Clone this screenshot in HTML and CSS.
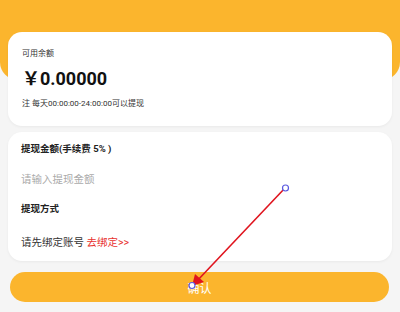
FILE: index.html
```html
<!DOCTYPE html>
<html lang="zh-CN">
<head>
    <meta charset="UTF-8">
    <meta name="viewport" content="width=device-width, initial-scale=1.0">
    <title>提现</title>
    <link rel="stylesheet" href="styles.css">
</head>
<body>
    <div class="page">
        <div class="header-bg"></div>

        <div class="content">
            <div class="card balance-card">
                <div class="label">可用余额</div>
                <div class="amount">￥0.00000</div>
                <div class="note">注 每天00:00:00-24:00:00可以提现</div>
            </div>

            <div class="card form-card">
                <div class="field-title">提现金额(手续费 5% )</div>
                <div class="field-input">请输入提现金额</div>
                <div class="field-title method">提现方式</div>
                <div class="bind-row">请先绑定账号 <span class="bind-link">去绑定&gt;&gt;</span></div>
            </div>

            <button class="btn-confirm">确认</button>
        </div>

        <!-- annotation arrow drawn over the page -->
        <svg class="annotation" width="400" height="312" viewBox="0 0 400 312">
            <line x1="285" y1="188" x2="196" y2="282" stroke="#e0141e" stroke-width="1.6"/>
            <polygon points="192,286 195,274 204,282" fill="#e0141e"/>
            <circle cx="285.5" cy="188" r="3" fill="#fff" stroke="#5a5ae0" stroke-width="1.2"/>
            <circle cx="192" cy="285.5" r="3" fill="#fff" stroke="#5a5ae0" stroke-width="1.2"/>
        </svg>
    </div>
</body>
</html>
```

FILE: styles.css
```css
body { margin: 0; background: #f5f5f5; font-family: Roboto, "Noto Sans CJK SC", sans-serif; color: #222; }
.page { position: relative; width: 400px; height: 312px; overflow: hidden; }
.header-bg { height: 80px; background: #fbb52d; border-radius: 0 0 18px 18px; }
.content { margin-top: -48px; display: flex; flex-direction: column; }
.card { background: #fff; margin: 0 8px; border-radius: 14px; box-shadow: 0 1px 3px rgba(0,0,0,0.05); }
.balance-card { padding: 15px 14px 15px; }
.label { font-size: 8px; line-height: 14px; color: #333; }
.amount { margin-top: 7px; font-size: 18px; line-height: 22px; font-weight: bold; color: #111; }
.note { margin-top: 7px; font-size: 8px; line-height: 14px; color: #333; }
.form-card { margin-top: 6px; padding: 10px 13px 9px; }
.field-title { font-size: 9.5px; line-height: 14px; font-weight: bold; color: #222; }
.field-input { margin-top: 15px; font-size: 10.5px; line-height: 18px; color: #aaa; }
.method { margin-top: 13px; }
.bind-row { margin-top: 18px; font-size: 10.5px; line-height: 18px; color: #333; }
.bind-link { color: #e8322e; }
.btn-confirm { margin: 11px 11px 0 10px; height: 30px; border: none; border-radius: 15px; background: #fbb52d; color: #fff; font-family: Roboto, "Noto Sans CJK SC", sans-serif; font-size: 12px; }
.annotation { position: absolute; left: 0; top: 0; pointer-events: none; }
```
